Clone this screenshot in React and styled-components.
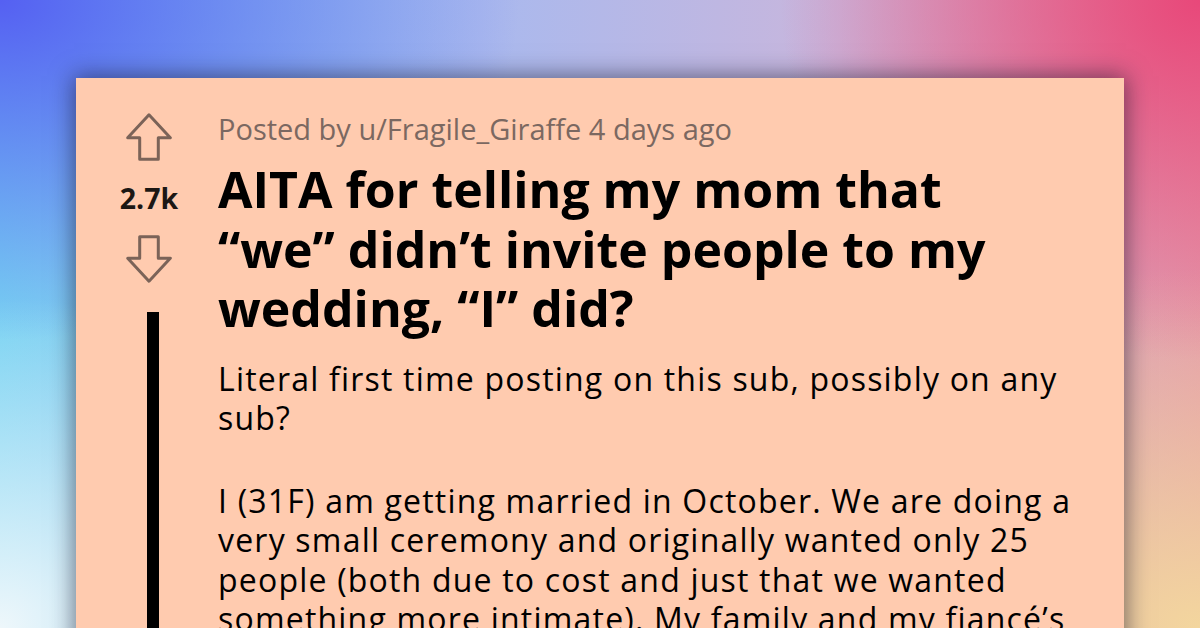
import React from "react";
import styled, { createGlobalStyle } from "styled-components";

const Global = createGlobalStyle`
  html, body { margin: 0; padding: 0; }
  body { width: 1200px; height: 628px; overflow: hidden; }
`;

const Page = styled.div`
  width: 1200px;
  height: 628px;
  overflow: hidden;
  box-sizing: border-box;
  padding: 78px 76px 0 76px;
  background:
    radial-gradient(ellipse 520px 340px at 0% 0%, #5560f2 0%, rgba(85, 96, 242, 0) 100%),
    radial-gradient(ellipse 420px 360px at 100% 0%, #e8487a 0%, rgba(232, 72, 122, 0) 100%),
    radial-gradient(ellipse 520px 360px at 100% 100%, #f3d69e 0%, rgba(243, 214, 158, 0) 100%),
    radial-gradient(ellipse 380px 330px at 0% 100%, #eef7fb 0%, rgba(238, 247, 251, 0) 100%),
    linear-gradient(90deg, #78d2f2 0%, #a9b9ee 40%, #c9b6dc 70%, #e39aab 100%);
  font-family: "Open Sans", "Noto Sans", sans-serif;
`;

const Card = styled.article`
  display: grid;
  grid-template-columns: 142px 1fr;
  min-height: 700px;
  background: #ffcbaf;
  box-shadow: 0 0 22px 2px rgba(20, 20, 40, 0.55);
`;

const VoteColumn = styled.div`
  display: flex;
  flex-direction: column;
  align-items: center;
  padding: 35px 0 0 4px;
`;

const ArrowIcon = styled.svg`
  display: block;
  width: 46px;
  height: 48px;
  transform: ${(p) => (p.$down ? "scaleY(-1)" : "none")};
`;

const Score = styled.div`
  margin: 22px 0 22px;
  font-size: 28.5px;
  line-height: 30px;
  font-weight: 700;
  color: #1c1714;
`;

const ThreadLine = styled.div`
  width: 12px;
  height: 400px;
  margin: 29px 0 0 8px;
  background: #000;
`;

const Content = styled.div`
  padding: 33px 34px 0 0;
`;

const Meta = styled.div`
  font-size: 29px;
  line-height: 36px;
  color: #7b6861;
`;

const Title = styled.h1`
  max-width: 820px;
  margin: 13px 0 20px;
  font-size: 50px;
  line-height: 59.5px;
  font-weight: 700;
  color: #000;
`;

const Paragraph = styled.p`
  margin: 0 0 43px;
  font-size: 32px;
  line-height: 39.5px;
  letter-spacing: 1.2px;
  color: #000;
`;

function Arrow({ down }) {
  return (
    <ArrowIcon $down={down} viewBox="0 0 46 48">
      <path
        d="M23 1.8 L44.3 24.8 L32.3 24.8 L32.3 46.3 L13.7 46.3 L13.7 24.8 L1.7 24.8 Z"
        fill="none"
        stroke="#7b6358"
        strokeWidth="3"
        strokeLinejoin="round"
      />
    </ArrowIcon>
  );
}

export default function App() {
  return (
    <>
      <Global />
      <Page>
        <Card>
          <VoteColumn>
            <Arrow />
            <Score>2.7k</Score>
            <Arrow down />
            <ThreadLine />
          </VoteColumn>
          <Content>
            <Meta>Posted by u/Fragile_Giraffe 4 days ago</Meta>
            <Title>
              AITA for telling my mom that “we” didn’t invite people to my
              wedding, “I” did?
            </Title>
            <Paragraph>
              Literal first time posting on this sub, possibly on any sub?
            </Paragraph>
            <Paragraph>
              I (31F) am getting married in October. We are doing a very small
              ceremony and originally wanted only 25 people (both due to cost
              and just that we wanted something more intimate). My family and
              my fiancé’s family are both large.
            </Paragraph>
          </Content>
        </Card>
      </Page>
    </>
  );
}
